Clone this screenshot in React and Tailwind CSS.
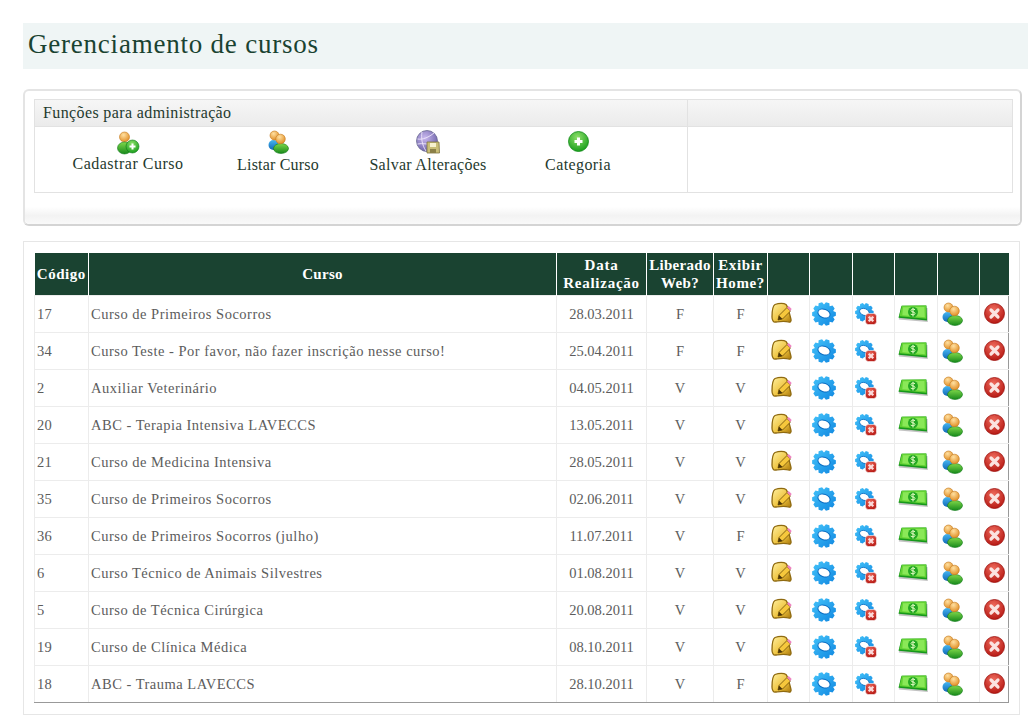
const cursos = [
  ["17", "Curso de Primeiros Socorros", "28.03.2011", "F", "F"],
  ["34", "Curso Teste - Por favor, não fazer inscrição nesse curso!", "25.04.2011", "F", "F"],
  ["2", "Auxiliar Veterinário", "04.05.2011", "V", "V"],
  ["20", "ABC - Terapia Intensiva LAVECCS", "13.05.2011", "V", "V"],
  ["21", "Curso de Medicina Intensiva", "28.05.2011", "V", "V"],
  ["35", "Curso de Primeiros Socorros", "02.06.2011", "V", "V"],
  ["36", "Curso de Primeiros Socorros (julho)", "11.07.2011", "V", "F"],
  ["6", "Curso Técnico de Animais Silvestres", "01.08.2011", "V", "V"],
  ["5", "Curso de Técnica Cirúrgica", "20.08.2011", "V", "V"],
  ["19", "Curso de Clínica Médica", "08.10.2011", "V", "V"],
  ["18", "ABC - Trauma LAVECCS", "28.10.2011", "V", "F"],
];

const Gradients = () => (
  <svg className="absolute h-0 w-0">
    <defs>
      <radialGradient id="head" cx="40%" cy="30%" r="75%">
        <stop offset="0%" stopColor="#ffe0a0" />
        <stop offset="100%" stopColor="#e08a20" />
      </radialGradient>
      <linearGradient id="green" x1="0" y1="0" x2="0" y2="1">
        <stop offset="0%" stopColor="#7fd84a" />
        <stop offset="100%" stopColor="#178a1c" />
      </linearGradient>
      <linearGradient id="blue" x1="0" y1="0" x2="0" y2="1">
        <stop offset="0%" stopColor="#45b6f0" />
        <stop offset="100%" stopColor="#1268b8" />
      </linearGradient>
      <linearGradient id="gear" x1="0" y1="0" x2="1" y2="1">
        <stop offset="0%" stopColor="#45c4fa" />
        <stop offset="100%" stopColor="#0f86e0" />
      </linearGradient>
      <radialGradient id="redball" cx="45%" cy="30%" r="75%">
        <stop offset="0%" stopColor="#ee6a5c" />
        <stop offset="100%" stopColor="#b3140f" />
      </radialGradient>
      <radialGradient id="greenball" cx="45%" cy="30%" r="75%">
        <stop offset="0%" stopColor="#8ee06a" />
        <stop offset="100%" stopColor="#129a18" />
      </radialGradient>
      <linearGradient id="gold" x1="0" y1="0" x2="1" y2="1">
        <stop offset="0%" stopColor="#fff0a0" />
        <stop offset="60%" stopColor="#eec23c" />
        <stop offset="100%" stopColor="#a9780c" />
      </linearGradient>
      <radialGradient id="globe" cx="40%" cy="35%" r="70%">
        <stop offset="0%" stopColor="#c9b8ee" />
        <stop offset="100%" stopColor="#6a60a8" />
      </radialGradient>
    </defs>
  </svg>
);

const EditIcon = () => (
  <svg width="22" height="24" viewBox="0 0 22 24">
    <path d="M4 2.500C8 1 13 1 15 2.500c2 2 3.500 9 5 15 .5 2-1 3-2.500 2.500-4-1.500-9-.5-13 0C2.500 20.500 1 18 1 15 1 10 1.500 4 4 2.500z" fill="url(#gold)" stroke="#8f6a10" strokeWidth="1.300" />
    <path d="M7 18l1-4.500 8-8 3.500 3.500-8 8z" fill="#f6c83c" stroke="#6b4b08" strokeWidth=".8" />
    <path d="M16 5.500l1.700-1.500 3 3-1.500 2z" fill="#ee82c0" />
    <path d="M7 18l1-4.500 3.500 3.500z" fill="#4a3508" />
  </svg>
);

// engrenagem com 10 dentes
const gearPoints = (() => {
  const pts = [];
  const dentes = 10;
  for (let i = 0; i < dentes; i++) {
    const base = (i / dentes) * Math.PI * 2;
    const passo = (Math.PI * 2) / dentes;
    [[-0.5, 9.6], [-0.24, 12], [0.24, 12], [0.5, 9.6]].forEach(([f, r]) => {
      const a = base + f * passo;
      pts.push(`${(12 + r * Math.cos(a)).toFixed(2)},${(12 + r * Math.sin(a)).toFixed(2)}`);
    });
  }
  return pts.join(" ");
})();

const Gear = () => (
  <>
    <polygon points={gearPoints} fill="url(#gear)" />
    <ellipse cx="12" cy="11.500" rx="6.300" ry="4.300" transform="rotate(20 12 11.500)" fill="#fff" stroke="#0b6fc4" strokeWidth="1" />
  </>
);

const GearIcon = () => (
  <svg width="24" height="24" viewBox="0 0 24 24">
    <Gear />
  </svg>
);

const GearXIcon = () => (
  <svg width="22" height="22" viewBox="0 0 22 22">
    <g transform="scale(.78)">
      <Gear />
    </g>
    <rect x="10.500" y="10.500" width="11" height="11" rx="3" fill="url(#redball)" stroke="#fff" strokeWidth=".6" />
    <path d="M13.700 13.700l4.600 4.600M18.300 13.700l-4.600 4.600" stroke="#fbdcdc" strokeWidth="2.200" />
  </svg>
);

const MoneyIcon = () => (
  <svg width="30" height="18" viewBox="0 0 30 18">
    <path d="M3 2L29.500 3 29.800 17 .8 14.500z" fill="#a8a8a8" opacity=".7" />
    <path d="M3.500 .8L28.500 .5 29 15.500 .5 12.800z" fill="#16981b" />
    <path d="M4 .8L28 .6 28.300 13.800 1.400 11.300z" fill="#62d233" />
    <path d="M5 2.200l21.500-.2.300 10.300-22.500-2.100z" fill="#8ae858" />
    <ellipse cx="15" cy="7" rx="5" ry="5.300" fill="#24a823" />
    <path d="M17 4.700c-1-.9-4-.9-4 .9 0 1.800 4 .9 4 2.800 0 1.800-3 1.600-4.300.7M15 2.700v8.800" stroke="#e6fbc4" strokeWidth="1" fill="none" />
  </svg>
);

const UsersIcon = () => (
  <svg width="21" height="24" viewBox="0 0 21 24">
    <ellipse cx="5.500" cy="15" rx="5" ry="5" fill="url(#blue)" />
    <circle cx="6.500" cy="5.500" r="4.500" fill="url(#head)" stroke="#c57a20" strokeWidth=".6" />
    <ellipse cx="13" cy="18.500" rx="7.500" ry="5" fill="url(#green)" stroke="#0f7a17" strokeWidth=".6" />
    <circle cx="12.500" cy="9" r="4.800" fill="url(#head)" stroke="#c57a20" strokeWidth=".6" />
  </svg>
);

const UserAddIcon = () => (
  <svg width="23" height="24" viewBox="0 0 23 24">
    <circle cx="7.500" cy="6" r="5" fill="url(#head)" stroke="#c57a20" strokeWidth=".6" />
    <ellipse cx="7.500" cy="17" rx="7" ry="6" fill="url(#green)" stroke="#0f7a17" strokeWidth=".6" />
    <circle cx="15.500" cy="15.500" r="6.500" fill="url(#greenball)" stroke="#0f7a17" strokeWidth=".6" />
    <path d="M15.500 12.500v6M12.500 15.500h6" stroke="#fff" strokeWidth="2" />
  </svg>
);

const RemoveIcon = () => (
  <svg width="21" height="21" viewBox="0 0 21 21">
    <circle cx="10.500" cy="10.500" r="10" fill="url(#redball)" stroke="#9c100c" strokeWidth=".8" />
    <path d="M7 7l7 7M14 7l-7 7" stroke="#fbe3e0" strokeWidth="3.200" strokeLinecap="round" />
  </svg>
);

const PlusIcon = () => (
  <svg width="21" height="21" viewBox="0 0 21 21">
    <circle cx="10.500" cy="10.500" r="10" fill="url(#greenball)" stroke="#0f8a16" strokeWidth=".8" />
    <path d="M10.500 6.500v8M6.500 10.500h8" stroke="#fff" strokeWidth="3" />
  </svg>
);

const SaveGlobeIcon = () => (
  <svg width="24" height="24" viewBox="0 0 24 24">
    <circle cx="11" cy="11" r="10.500" fill="url(#globe)" stroke="#6a6a90" strokeWidth=".8" />
    <path d="M1.500 9C7 10 13 7 18 3M6 2c-1 6 0 13 4 19M1.500 14c5-1 12 0 18 2" stroke="#efe8fb" strokeWidth=".9" fill="none" />
    <path d="M11 12h12l.5 11H11z" fill="#c9be78" stroke="#7d7440" strokeWidth=".8" />
    <rect x="14" y="13" width="6" height="4" fill="#f7f2cf" />
    <rect x="14" y="19" width="6" height="4" fill="#8a8048" />
  </svg>
);

const acoes = [
  { label: "Cadastrar Curso", Icon: UserAddIcon, box: "pt-[4px] gap-0", tracking: "tracking-[0.5px]" },
  { label: "Listar Curso", Icon: UsersIcon, box: "pt-[3px] gap-[2px]", tracking: "tracking-[0.2px]" },
  { label: "Salvar Alterações", Icon: SaveGlobeIcon, box: "pt-[3px] gap-[2px]", tracking: "tracking-[0.28px]" },
  { label: "Categoria", Icon: PlusIcon, box: "pt-[4px] gap-[4px]", tracking: "tracking-[0.4px]" },
];

const colunasIcone = [
  { Icon: EditIcon, pad: "pl-[3px]" },
  { Icon: GearIcon, pad: "pl-[2px]" },
  { Icon: GearXIcon, pad: "pl-[2px]" },
  { Icon: MoneyIcon, pad: "pl-[3px]" },
  { Icon: UsersIcon, pad: "pl-[4px]" },
  { Icon: RemoveIcon, pad: "pl-[4px]" },
];

const larguras = ["w-[54px]", "w-[468px]", "w-[90px]", "w-[67px]", "w-[54px]", "w-[42px]", "w-[43px]", "w-[42px]", "w-[43px]", "w-[42px]", "w-[29px]"];
const cabecalho = [
  { titulo: "Código", tracking: "tracking-[0.5px]" },
  { titulo: "Curso", tracking: "tracking-[0.3px]" },
  { titulo: "Data Realização", tracking: "tracking-[0.75px]" },
  { titulo: "Liberado Web?", tracking: "tracking-[0.3px]" },
  { titulo: "Exibir Home?", tracking: "tracking-[0.6px]" },
  { titulo: "" },
  { titulo: "" },
  { titulo: "" },
  { titulo: "" },
  { titulo: "" },
  { titulo: "" },
];

export default function App() {
  return (
    <div className="min-h-[722px] overflow-hidden bg-white font-['Liberation_Serif',serif]">
      <Gradients />
      <div className="pt-[23px] pl-[23px]">
        <div className="mr-[4px] flex h-[46px] items-center bg-[#eff5f5] pb-[3px] pl-[5px]">
          <h1 className="text-[27px] tracking-[0.78px] text-[#1a4331]">Gerenciamento de cursos</h1>
        </div>

        {/* Funcoes */}
        <div className="mt-[20px] mr-[10px] h-[137px] rounded-[6px] border-2 border-[#e4e4e4] border-r-[#d4d4d4] border-b-[#d4d4d4] bg-white">
          <div className="flex h-[116px] flex-col pt-[8px] pr-[7px] pl-[9px]">
            <div className="flex h-[94px] border border-[#e2e2e2]">
              <div className="flex w-[653px] flex-col border-r border-[#e2e2e2]">
                <div className="flex h-[27px] items-center border-b border-[#e2e2e2] bg-gradient-to-b from-[#f6f6f6] to-[#ebebeb] pl-[8px] text-[16px] tracking-[0.38px] text-[#1f3a2e]">
                  Funções para administração
                </div>
                <div className="flex pl-[18px]">
                  {acoes.map(({ label, Icon, box, tracking }) => (
                    <div key={label} className={`flex w-[150px] flex-col items-center ${box}`}>
                      <Icon />
                      <span className={`text-[16px] leading-[18px] text-[#1f3a2e] ${tracking}`}>{label}</span>
                    </div>
                  ))}
                </div>
              </div>
              <div className="flex-1">
                <div className="h-[27px] border-b border-[#e2e2e2] bg-gradient-to-b from-[#f6f6f6] to-[#ebebeb]" />
              </div>
            </div>
          </div>
          <div className="h-[17px] rounded-b-[5px] bg-gradient-to-b from-white via-[#f3f3f3] to-[#f9f9f9]" />
        </div>

        {/* Lista de cursos */}
        <div className="mt-[15px] mr-[12px] h-[474px] border border-[#e6e6e6] pt-[11px] pl-[10px]">
          <div className="w-[975px] border-r border-b border-[#999999]">
            <table className="w-[974px] table-fixed border-collapse text-[14px]">
              <colgroup>
                {larguras.map((w, i) => (
                  <col key={i} className={w} />
                ))}
              </colgroup>
              <thead>
                <tr className="h-[42px]">
                  {cabecalho.map(({ titulo, tracking }, i) => (
                    <th key={i} className={`border-r border-white bg-[#1a4331] px-0 text-center text-[15px] leading-[18px] font-bold text-white last:border-r-0 ${tracking}`}>
                      {titulo}
                    </th>
                  ))}
                </tr>
              </thead>
              <tbody>
                {cursos.map(([codigo, nome, data, web, home]) => (
                  <tr key={codigo} className="h-[37px] text-[#5c5c5c] last:[&>td]:border-b-0">
                    <td className="border border-[#ececec] pt-[2px] pl-[2px] text-[14.500px] tracking-[0.2px]">{codigo}</td>
                    <td className="border border-[#ececec] pt-[2px] pl-[2px] text-[14.500px] tracking-[0.5px]">{nome}</td>
                    <td className="border border-[#ececec] pt-[2px] text-center text-[14.500px]">{data}</td>
                    <td className="border border-[#ececec] pt-[2px] text-center text-[14.500px]">{web}</td>
                    <td className="border border-[#ececec] pt-[2px] text-center text-[14.500px]">{home}</td>
                    {colunasIcone.map(({ Icon, pad }, i) => (
                      <td key={i} className={`border border-[#ececec] last:border-r-0 ${pad}`}>
                        <div className="flex items-center">
                          <Icon />
                        </div>
                      </td>
                    ))}
                  </tr>
                ))}
              </tbody>
            </table>
          </div>
        </div>
      </div>
    </div>
  );
}
